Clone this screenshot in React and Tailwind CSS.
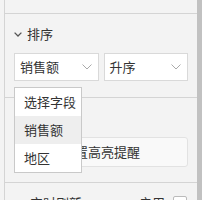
import React from "react";

const font = { fontFamily: '"Noto Sans CJK SC", "Noto Sans", sans-serif' };

const Chevron = ({ className }) => (
    <svg viewBox="0 0 10 6" className={className} fill="none" stroke="currentColor" strokeWidth="1">
        <path d="M0.5 0.5 L5 5 L9.5 0.5" />
    </svg>
);

const Select = ({ value }) => (
    <div className="h-[28px] bg-white border border-[#d9d9d9] flex items-center justify-between pl-[5px] pr-[6px] text-[13px] text-[#333]">
        <span>{value}</span>
        <Chevron className="w-[10px] h-[6px] text-[#aaa]" />
    </div>
);

export default function App() {
    const options = ["选择字段", "销售额", "地区"];

    return (
        <div className="relative w-[202px] h-[200px] overflow-hidden bg-[#f3f3f3] flex" style={font}>
            <div className="w-[4px] shrink-0" />
            <div className="flex-1 border-l border-[#d4d4d4] flex flex-col">
                {/* previous section */}
                <div className="h-[14px] shrink-0 border-b border-[#d4d4d4]" />

                {/* sort section */}
                <div className="shrink-0 border-b border-[#d4d4d4] px-[9px] pt-[10px] pb-[16px]">
                    <div className="h-[20px] flex items-center gap-[5px] text-[13px] text-[#333]">
                        <svg viewBox="0 0 8 5" className="w-[8px] h-[5px] text-[#555]" fill="none" stroke="currentColor" strokeWidth="1.3">
                            <path d="M0.6 0.6 L4 4 L7.4 0.6" />
                        </svg>
                        <span>排序</span>
                    </div>
                    <div className="mt-[9px] grid grid-cols-2 gap-[5px]">
                        <Select value="销售额" />
                        <Select value="升序" />
                    </div>
                </div>

                {/* highlight section */}
                <div className="shrink-0 border-b border-[#d4d4d4] px-[9px] pt-[39px] pb-[15px]">
                    <button className="w-full h-[30px] bg-[#f9f9f9] border border-[#e2e2e2] rounded-[3px] text-[13px] text-[#333] flex items-center justify-center">
                        设置高亮提醒
                    </button>
                </div>

                {/* refresh row */}
                <div className="flex items-start pl-[25px] pr-[10px] pt-[11px] text-[13px] text-[#333]">
                    <span className="leading-[18px]">实时刷新</span>
                    <span className="ml-auto leading-[18px]">启用</span>
                    <span className="ml-[8px] mt-[2px] w-[14px] h-[14px] bg-white border border-[#bbb] rounded-[2px]" />
                </div>
            </div>
            <div className="w-[5px] shrink-0 bg-[#c1c1c1]" />

            {/* dropdown menu */}
            <div className="absolute left-[14px] top-[87px] w-[68px] bg-white border border-[#c9c9c9] text-[13px] text-[#333]">
                {options.map((o, i) => (
                    <div key={o} className={`h-[28px] flex items-center pl-[9px] ${i === 1 ? "bg-[#eeeeee]" : ""}`}>
                        {o}
                    </div>
                ))}
            </div>
        </div>
    );
}
